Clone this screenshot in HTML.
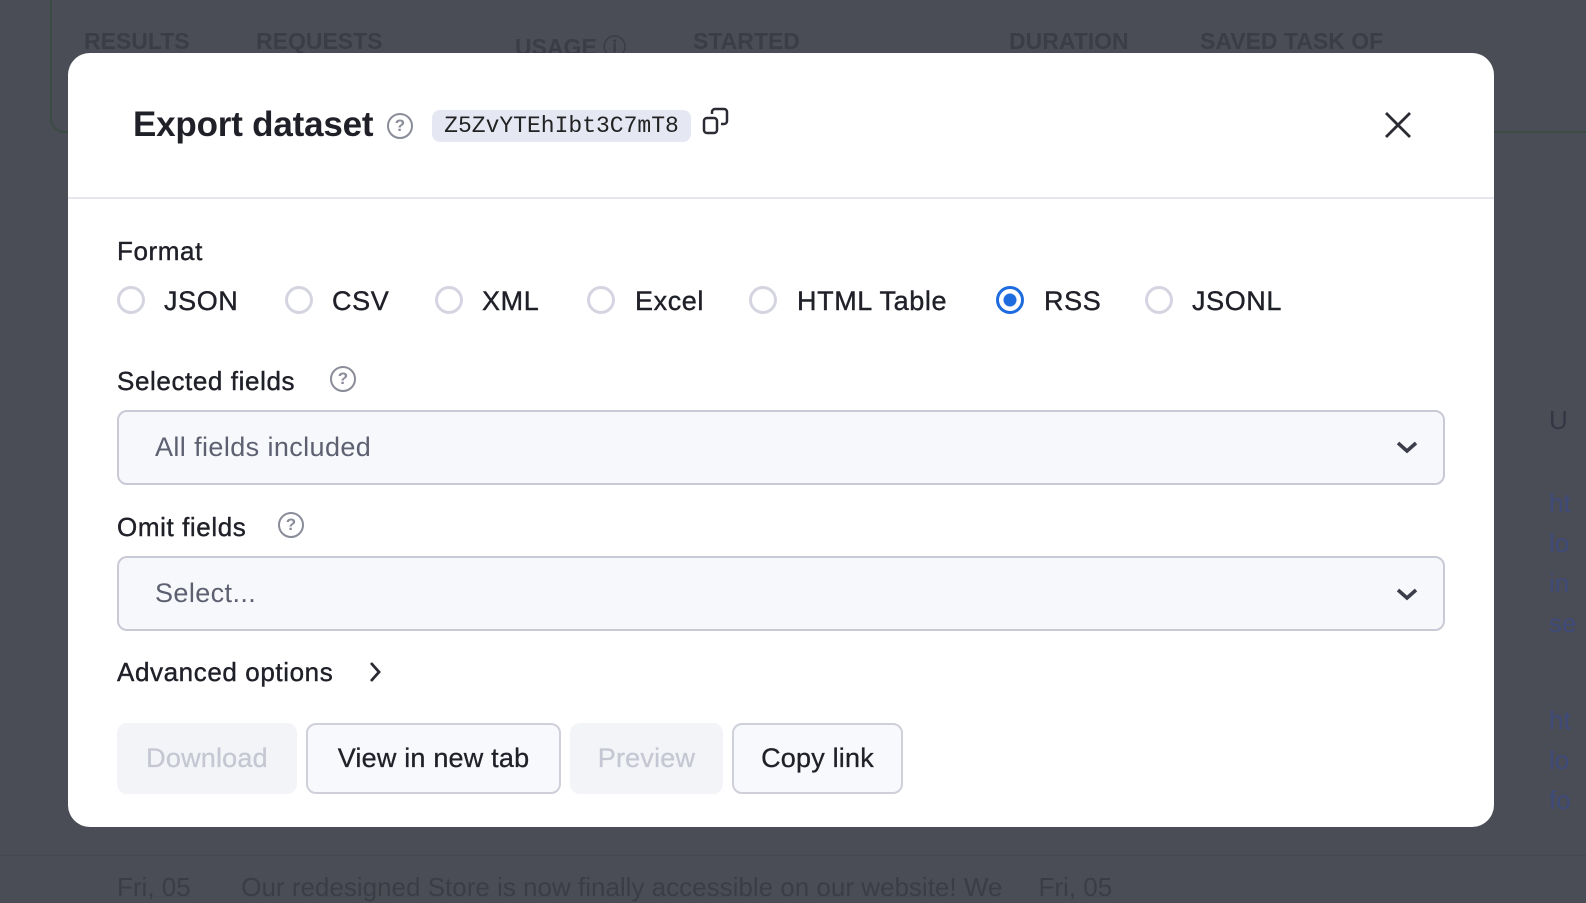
<!DOCTYPE html>
<html><head><meta charset="utf-8"><style>
*{margin:0;padding:0;box-sizing:border-box}
body{width:1586px;height:902px;background:#4b4d56;font-family:"Liberation Sans",sans-serif;position:relative;overflow:hidden}
.a{position:absolute}
.bgt{color:#3b3d46;font-weight:bold;font-size:23px;top:28px}
.modal{left:68px;top:53px;width:1426px;height:774px;background:#fff;border-radius:22px}
.lbl{font-size:26px;color:#1f2028;letter-spacing:0.6px;-webkit-text-stroke:0.4px #1f2028}
.radio{width:28px;height:28px;border:3px solid #d4d5e0;border-radius:50%}
.sel{left:49px;width:1328px;height:75px;border:2px solid #c9cad6;border-radius:10px;background:#f7f8fb;font-size:27px;color:#5d6070;padding:20px 0 0 36px;letter-spacing:0.4px}
.btn{top:670px;height:71px;border-radius:10px;font-size:27px;text-align:center;line-height:71px;letter-spacing:0.2px;-webkit-text-stroke:0.3px currentColor}
.q{width:26px;height:26px;border:2.5px solid #8a8c99;border-radius:50%;color:#8a8c99;font-size:17px;font-weight:bold;text-align:center;line-height:21px}
</style></head><body>
<div class="a" style="left:50px;top:0;width:1586px;height:133px;border:2px solid #3c4b44;border-top:none;border-radius:0 0 0 14px"></div>
<div class="a bgt" style="left:84px">RESULTS</div>
<div class="a bgt" style="left:256px">REQUESTS</div>
<div class="a bgt" style="left:515px">USAGE ⓘ</div>
<div class="a bgt" style="left:693px">STARTED</div>
<div class="a bgt" style="left:1009px">DURATION</div>
<div class="a bgt" style="left:1200px">SAVED TASK OF</div>
<div class="a" style="left:1549px;top:405px;font-size:26px;color:#343645">U</div>
<div class="a" style="left:1549px;top:483px;font-size:26px;color:#3d4a7a;line-height:40px">ht<br>lo<br>in<br>se</div>
<div class="a" style="left:1549px;top:700px;font-size:26px;color:#3d4a7a;line-height:40px">ht<br>lo<br>fo</div>
<div class="a" style="left:117px;top:872px;font-size:26px;color:#3b3d46">Fri, 05 &nbsp;&nbsp;&nbsp;&nbsp;&nbsp; Our redesigned Store is now finally accessible on our website! We &nbsp;&nbsp;&nbsp; Fri, 05</div>
<div class="a" style="left:0;top:855px;width:1586px;height:1px;background:#444650"></div>
<div class="a modal">
  <div class="a" style="left:65px;top:52px;font-size:35px;font-weight:bold;color:#1f2028;letter-spacing:-0.2px">Export dataset</div>
  <div class="a q" style="left:319px;top:60px">?</div>
  <div class="a" style="left:364px;top:57px;width:259px;height:32px;background:#e5e7f3;border-radius:8px;font-family:'Liberation Mono',monospace;font-size:23px;color:#222;text-align:center;line-height:32px">Z5ZvYTEhIbt3C7mT8</div>
  <svg class="a" style="left:634px;top:54px" width="30" height="30" viewBox="0 0 30 30" fill="none" stroke="#2a2b33" stroke-width="2.5"><rect x="2" y="11" width="13" height="15" rx="3"/><path d="M10 7V5a3 3 0 0 1 3-3h9a3 3 0 0 1 3 3v9a3 3 0 0 1-3 3h-3"/></svg>
  <svg class="a" style="left:1316px;top:58px" width="28" height="28" viewBox="0 0 28 28" stroke="#2a2b33" stroke-width="2.8"><path d="M2 2L26 26M26 2L2 26"/></svg>
  <div class="a" style="left:0;top:144px;width:1426px;height:2px;background:#e6e7ee"></div>
  <div class="a lbl" style="left:49px;top:183px">Format</div>
  <div class="a radio" style="left:49px;top:233px"></div><div class="a lbl" style="left:96px;top:233px;font-size:27px">JSON</div>
  <div class="a radio" style="left:217px;top:233px"></div><div class="a lbl" style="left:264px;top:233px;font-size:27px">CSV</div>
  <div class="a radio" style="left:367px;top:233px"></div><div class="a lbl" style="left:414px;top:233px;font-size:27px">XML</div>
  <div class="a radio" style="left:519px;top:233px"></div><div class="a lbl" style="left:567px;top:233px;font-size:27px">Excel</div>
  <div class="a radio" style="left:681px;top:233px"></div><div class="a lbl" style="left:729px;top:233px;font-size:27px">HTML Table</div>
  <div class="a radio" style="left:928px;top:233px;border-color:#1e6be0;border-width:3px;background:radial-gradient(#1e6be0 0 6px,#fff 7px)"></div><div class="a lbl" style="left:976px;top:233px;font-size:27px">RSS</div>
  <div class="a radio" style="left:1077px;top:233px"></div><div class="a lbl" style="left:1124px;top:233px;font-size:27px">JSONL</div>
  <div class="a lbl" style="left:49px;top:313px">Selected fields</div>
  <div class="a q" style="left:262px;top:313px">?</div>
  <div class="a sel" style="top:357px">All fields included</div>
  <svg class="a" style="left:1327px;top:386px" width="24" height="16" viewBox="0 0 24 16" fill="none" stroke="#3b3d4a" stroke-width="3.6"><path d="M3 4l9 8 9-8"/></svg>
  <div class="a lbl" style="left:49px;top:459px">Omit fields</div>
  <div class="a q" style="left:210px;top:459px">?</div>
  <div class="a sel" style="top:503px">Select...</div>
  <svg class="a" style="left:1327px;top:533px" width="24" height="16" viewBox="0 0 24 16" fill="none" stroke="#3b3d4a" stroke-width="3.6"><path d="M3 4l9 8 9-8"/></svg>
  <div class="a lbl" style="left:49px;top:604px">Advanced options</div>
  <svg class="a" style="left:299px;top:607px" width="16" height="24" viewBox="0 0 16 24" fill="none" stroke="#2a2b33" stroke-width="2.8"><path d="M4 3l8 9-8 9"/></svg>
  <div class="a btn" style="left:49px;width:180px;background:#f3f4f8;color:#c5c7d3">Download</div>
  <div class="a btn" style="left:238px;width:255px;background:#f8f9fc;border:2px solid #cfd0da;color:#1f2028;line-height:67px">View in new tab</div>
  <div class="a btn" style="left:502px;width:153px;background:#f3f4f8;color:#c5c7d3">Preview</div>
  <div class="a btn" style="left:664px;width:171px;background:#f8f9fc;border:2px solid #cfd0da;color:#1f2028;line-height:67px">Copy link</div>
</div>
</body></html>
